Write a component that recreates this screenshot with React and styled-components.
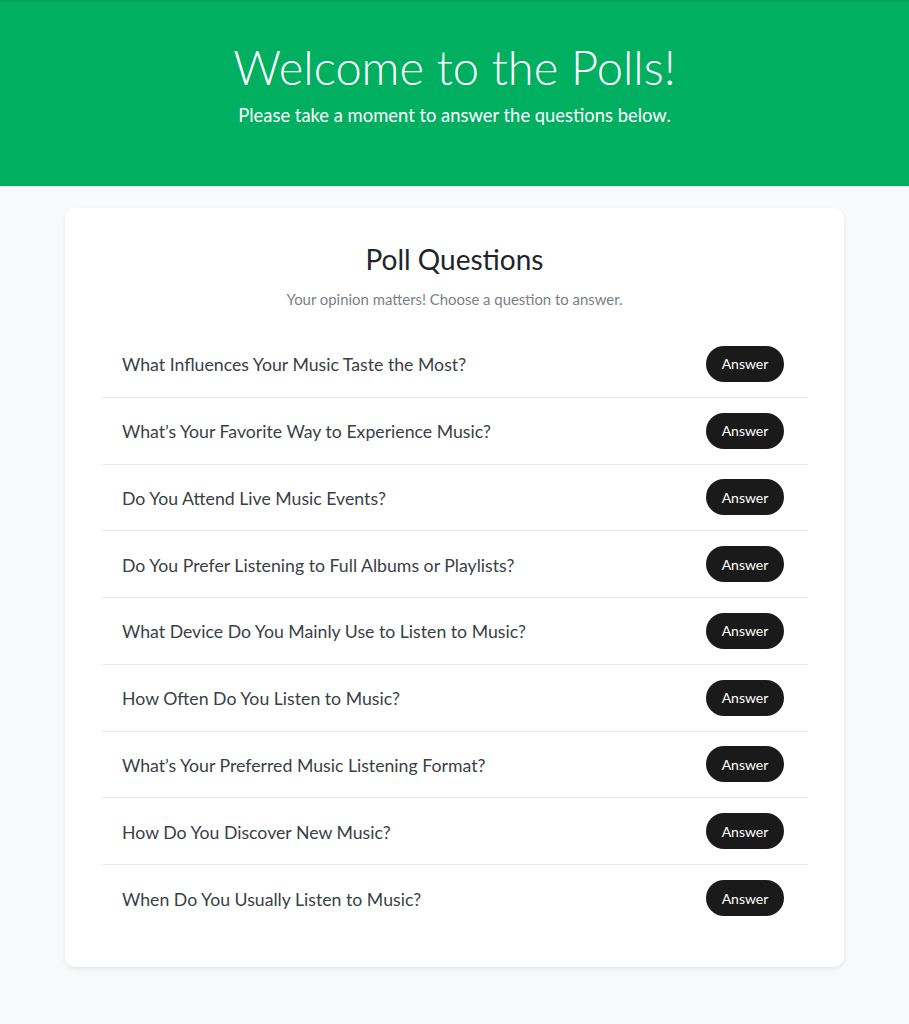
import React from "react";
import styled, { createGlobalStyle } from "styled-components";

const GlobalStyle = createGlobalStyle`
  * { box-sizing: border-box; }
  body {
    margin: 0;
    background: #f8f9fa;
    font-family: "Lato", "Noto Sans", sans-serif;
    color: #212529;
  }
`;

const Header = styled.header`
  background: #00af5f;
  border-top: 2px solid #04a55a;
  height: 186px;
  display: flex;
  flex-direction: column;
  align-items: center;
  padding-top: 36px;
  color: #fff;
`;

const Title = styled.h1`
  margin: 0;
  font-size: 47px;
  font-weight: 300;
  line-height: 58px;
`;

const Lead = styled.p`
  margin: 7px 0 0;
  font-size: 18.4px;
  font-weight: 400;
  line-height: 24px;
`;

const Main = styled.main`
  padding: 22px 65px 56px;
`;

const Card = styled.section`
  background: #fff;
  border-radius: 10px;
  box-shadow: 0 2px 4px rgba(0, 0, 0, 0.08);
  padding: 34px 36px 35px;
`;

const CardTitle = styled.h2`
  margin: 0;
  text-align: center;
  font-size: 28px;
  font-weight: 400;
  line-height: 34px;
  color: #212529;
`;

const CardLead = styled.p`
  margin: 13px 0 21px;
  text-align: center;
  font-size: 14.9px;
  line-height: 21px;
  color: #7a7f85;
`;

const List = styled.ul`
  list-style: none;
  margin: 0;
  padding: 0;
`;

const Row = styled.li`
  display: flex;
  align-items: center;
  justify-content: space-between;
  height: 66.75px;
  padding: 0 24px 0 21px;
  border-bottom: ${(p) => (p.$last ? "none" : "1px solid #e9ecef")};
`;

const Question = styled.span`
  font-size: 17.7px;
  color: #3a3f45;
  padding-top: 2px;
`;

const AnswerButton = styled.button`
  width: 78px;
  height: 36px;
  border: none;
  border-radius: 18px;
  background: #1a1a1a;
  color: #fff;
  font-family: inherit;
  font-size: 14px;
  cursor: pointer;
`;

const questions = [
  "What Influences Your Music Taste the Most?",
  "What’s Your Favorite Way to Experience Music?",
  "Do You Attend Live Music Events?",
  "Do You Prefer Listening to Full Albums or Playlists?",
  "What Device Do You Mainly Use to Listen to Music?",
  "How Often Do You Listen to Music?",
  "What’s Your Preferred Music Listening Format?",
  "How Do You Discover New Music?",
  "When Do You Usually Listen to Music?",
];

export default function App() {
  return (
    <>
      <GlobalStyle />
      <Header>
        <Title>Welcome to the Polls!</Title>
        <Lead>Please take a moment to answer the questions below.</Lead>
      </Header>
      <Main>
        <Card>
          <CardTitle>Poll Questions</CardTitle>
          <CardLead>Your opinion matters! Choose a question to answer.</CardLead>
          <List>
            {questions.map((q, i) => (
              <Row key={q} $last={i === questions.length - 1}>
                <Question>{q}</Question>
                <AnswerButton>Answer</AnswerButton>
              </Row>
            ))}
          </List>
        </Card>
      </Main>
    </>
  );
}
